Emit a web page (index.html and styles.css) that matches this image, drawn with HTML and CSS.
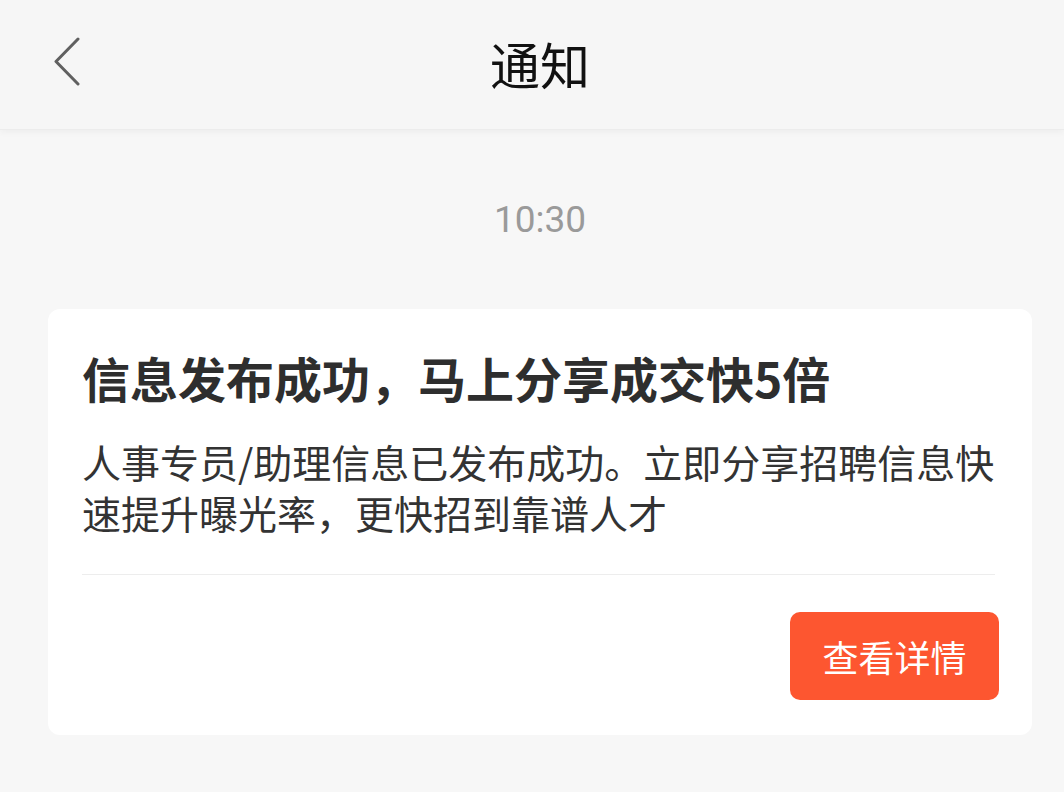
FILE: index.html
```html
<!DOCTYPE html>
<html lang="zh-CN">
<head>
<meta charset="utf-8">
<title>通知</title>
<link rel="stylesheet" href="styles.css">
</head>
<body>
<header class="topbar">
  <div class="back">
    <svg width="34" height="52" viewBox="0 0 34 52" aria-hidden="true">
      <polyline points="27,2 5,24.5 27,47" fill="none" stroke="#606060" stroke-width="3" stroke-linecap="round" stroke-linejoin="round"/>
    </svg>
  </div>
  <h1 class="title">通知</h1>
  <div class="spacer"></div>
</header>
<main class="content">
  <div class="time">10:30</div>
  <section class="card">
    <h2 class="card-title">信息发布成功，马上分享成交快5倍</h2>
    <p class="card-desc">人事专员/助理信息已发布成功。立即分享招聘信息快速提升曝光率，更快招到靠谱人才</p>
    <div class="divider"></div>
    <div class="actions">
      <button class="btn">查看详情</button>
    </div>
  </section>
</main>
</body>
</html>
```

FILE: styles.css
```css
* { box-sizing: border-box; }
html, body {
  margin: 0;
  padding: 0;
}
body {
  width: 1064px;
  height: 792px;
  overflow: hidden;
  background: #f7f7f7;
  font-family: "Noto Sans CJK SC", "Noto Sans", sans-serif;
  color: #333;
}
.topbar {
  height: 130px;
  display: grid;
  grid-template-columns: 1fr auto 1fr;
  align-items: center;
  background: #f6f6f6;
  border-bottom: 1px solid #ececec;
  box-shadow: 0 3px 6px rgba(0, 0, 0, 0.035);
}
.back {
  padding-left: 51px;
  display: flex;
  align-items: center;
  padding-bottom: 4px;
}
.back svg { display: block; }
.title {
  margin: 0;
  font-size: 50px;
  font-weight: 400;
  color: #111;
  line-height: 60px;
  padding-left: 16px;
  padding-bottom: 4px;
}
.content {
  padding: 0 32px 0 48px;
}
.time {
  padding-top: 69px;
  height: 111px;
  line-height: 42px;
  text-align: center;
  font-family: Roboto, "Noto Sans", sans-serif;
  font-size: 37px;
  color: #9a9a9a;
}
.card {
  margin-top: 68px;
  background: #fff;
  border-radius: 12px;
  padding: 38px 33px 35px 34px;
}
.card-title {
  margin: 0;
  font-size: 48px;
  line-height: 60px;
  font-weight: 700;
  color: #2e2e2e;
}
.card-desc {
  margin: 29px 0 0;
  font-size: 39px;
  line-height: 51px;
  color: #333;
}
.divider {
  margin-top: 36px;
  height: 1px;
  background: #ededed;
  margin-right: 4px;
}
.actions {
  display: flex;
  justify-content: flex-end;
  margin-top: 37px;
}
.btn {
  width: 209px;
  height: 88px;
  border: none;
  border-radius: 10px;
  background: #fd5630;
  color: #fff;
  font-family: "Noto Sans CJK SC", sans-serif;
  font-size: 36px;
  padding: 0;
}
```
